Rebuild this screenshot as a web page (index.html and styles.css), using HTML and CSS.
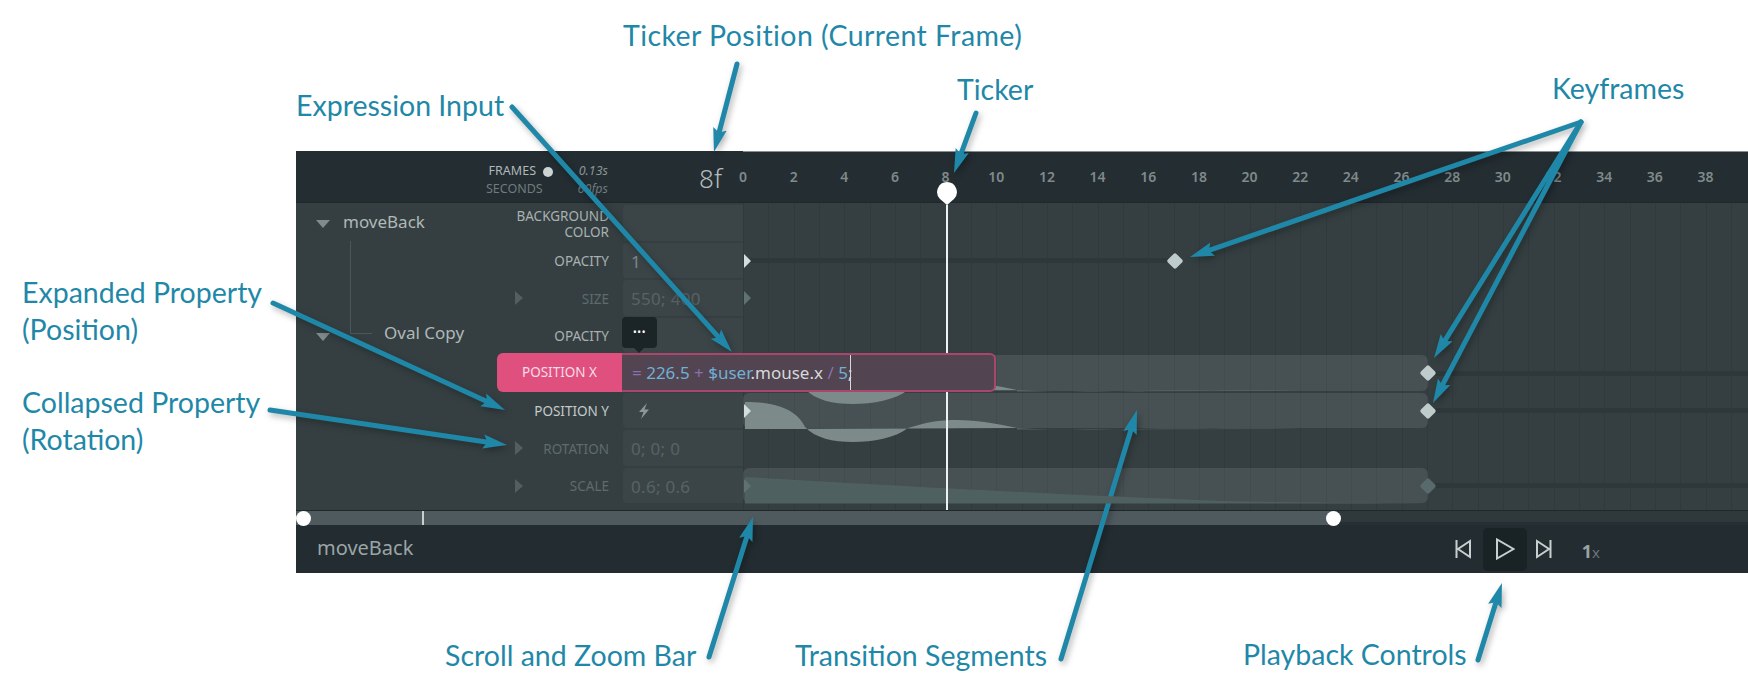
FILE: index.html
```html
<!DOCTYPE html>
<html lang="en">
<head>
    <meta charset="UTF-8">
    <title>Timeline overview</title>
    <link rel="stylesheet" href="styles.css">
</head>
<body>
    <div class="figure">
        <div class="app">
            <div class="app-header">
                <div class="header-left">
                    <div class="mode-labels">
                        <div class="mode-on">FRAMES</div>
                        <div>SECONDS</div>
                    </div>
                    <span class="mode-dot"></span>
                    <div class="frame-stats">
                        <div>0.13s</div>
                        <div>60fps</div>
                    </div>
                    <div class="current-frame">8f</div>
                </div>
                <div class="ruler-wrap">
                    <div class="ruler">
                        <span>0</span><span>2</span><span>4</span><span>6</span><span>8</span>
                        <span>10</span><span>12</span><span>14</span><span>16</span><span>18</span>
                        <span>20</span><span>22</span><span>24</span><span>26</span><span>28</span>
                        <span>30</span><span>32</span><span>34</span><span>36</span><span>38</span>
                    </div>
                </div>
            </div>

            <div class="timeline-body">
                <div class="row">
                    <div class="row-left">
                        <div class="element-name">
                            <span class="tri-down"></span>
                            <span class="name-root">moveBack</span>
                            <span class="tree-line"></span>
                        </div>
                        <div class="prop-label">BACKGROUND<br>COLOR</div>
                    </div>
                    <div class="prop-input"></div>
                    <div class="track"></div>
                </div>

                <div class="row">
                    <div class="row-left">
                        <div class="prop-label">OPACITY</div>
                    </div>
                    <div class="prop-input">1</div>
                    <div class="track">
                        <span class="track-line line-to-17"></span>
                        <span class="kf-start"></span>
                        <span class="keyframe frame-17"></span>
                    </div>
                </div>

                <div class="row">
                    <div class="row-left">
                        <span class="tri-right"></span>
                        <div class="prop-label dim">SIZE</div>
                    </div>
                    <div class="prop-input dim">550; 400</div>
                    <div class="track">
                        <span class="kf-start dim-kf"></span>
                    </div>
                </div>

                <div class="row">
                    <div class="row-left">
                        <div class="element-name">
                            <span class="tri-down"></span>
                            <span class="name-child">Oval Copy</span>
                        </div>
                        <div class="prop-label">OPACITY</div>
                    </div>
                    <div class="prop-input"></div>
                    <div class="track"></div>
                    <div class="more-tip">&bull;&bull;&bull;</div>
                </div>

                <div class="row">
                    <div class="row-left"></div>
                    <div class="prop-input"></div>
                    <div class="track">
                        <div class="segment">
                            <svg class="curve" width="685" height="36" viewBox="0 0 685 36">
                                <path d="M2 35L2 9C28 9 52 14 62 34C72 45 90 49 110 49C130 49 152 45 165 35C185 29 195 27 214 27C235 27 255 31 274 35L2 36Z"/>
                                <path class="sliver" d="M274 35C300 37 320 36 345 37C370 37 400 35 445 35.5C480 36 520 35 560 36L274 36.5Z"/>
                            </svg>
                        </div>
                        <span class="track-line line-after-27"></span>
                        <span class="keyframe frame-27"></span>
                    </div>
                    <div class="expr-editor">
                        <div class="expr-label">POSITION X</div>
                        <div class="expr-input"><span class="tok-op">=</span> <span class="tok-val">226.5</span> <span class="tok-op">+</span> <span class="tok-val">$user</span>.mouse.x <span class="tok-op">/</span> <span class="tok-val">5</span>;<span class="expr-cursor"></span></div>
                    </div>
                </div>

                <div class="row">
                    <div class="row-left">
                        <div class="prop-label bright">POSITION Y</div>
                    </div>
                    <div class="prop-input">
                        <svg class="bolt" width="14" height="16" viewBox="0 0 14 16">
                            <polygon points="10,0 2,9 6.5,9 4,16 12,6.5 7.5,6.5"/>
                        </svg>
                    </div>
                    <div class="track">
                        <div class="segment">
                            <svg class="curve" width="685" height="36" viewBox="0 0 685 36">
                                <path d="M2 35L2 9C28 9 52 14 62 34C72 45 90 49 110 49C130 49 152 45 165 35C185 29 195 27 214 27C235 27 255 31 274 35L2 36Z"/>
                                <path class="sliver" d="M274 35C300 37 320 36 345 37C370 37 400 35 445 35.5C480 36 520 35 560 36L274 36.5Z"/>
                            </svg>
                        </div>
                        <span class="kf-start"></span>
                        <span class="track-line line-after-27"></span>
                        <span class="keyframe frame-27"></span>
                    </div>
                </div>

                <div class="row">
                    <div class="row-left">
                        <span class="tri-right"></span>
                        <div class="prop-label dim">ROTATION</div>
                    </div>
                    <div class="prop-input dim">0; 0; 0</div>
                    <div class="track"></div>
                </div>

                <div class="row">
                    <div class="row-left">
                        <span class="tri-right"></span>
                        <div class="prop-label dim">SCALE</div>
                    </div>
                    <div class="prop-input dim">0.6; 0.6</div>
                    <div class="track">
                        <div class="segment">
                            <svg class="curve curve-scale" width="685" height="36" viewBox="0 0 685 36">
                                <path d="M2 35.5L2 9C120 16 300 26 480 33C560 35 620 35 684 35.5Z"/>
                            </svg>
                        </div>
                        <span class="kf-start dim-kf"></span>
                        <span class="track-line line-after-27"></span>
                        <span class="keyframe frame-27 dim-diamond"></span>
                    </div>
                </div>
            </div>

            <div class="scrollbar">
                <div class="scroll-thumb">
                    <span class="scroll-handle handle-left"></span>
                    <span class="scroll-tick"></span>
                    <span class="scroll-handle handle-right"></span>
                </div>
            </div>

            <div class="app-footer">
                <div class="comp-name">moveBack</div>
                <div class="controls">
                    <svg class="ctl-icon" width="16" height="20" viewBox="0 0 16 20">
                        <path d="M1.5 1V19M15 2V18L3 10Z"/>
                    </svg>
                    <div class="play-btn">
                        <svg class="ctl-icon" width="20" height="22" viewBox="0 0 20 22">
                            <path d="M2 1.5V20.5L18.5 11Z"/>
                        </svg>
                    </div>
                    <svg class="ctl-icon" width="16" height="20" viewBox="0 0 16 20">
                        <path d="M14.5 1V19M1 2V18L13 10Z"/>
                    </svg>
                    <div class="speed"><b>1</b>x</div>
                </div>
            </div>

            <div class="ticker">
                <svg width="20" height="23" viewBox="0 0 20 23">
                    <path d="M10 0A10 10 0 0 1 17 17L10 23L3 17A10 10 0 0 1 10 0Z"/>
                </svg>
                <span class="ticker-line"></span>
            </div>
        </div>

        <!-- callouts -->
        <div class="callout c-ticker-pos">Ticker Position (Current Frame)</div>
        <div class="callout c-ticker">Ticker</div>
        <div class="callout c-keyframes">Keyframes</div>
        <div class="callout c-expression">Expression Input</div>
        <div class="callout c-expanded">Expanded Property<br>(Position)</div>
        <div class="callout c-collapsed">Collapsed Property<br>(Rotation)</div>
        <div class="callout c-scroll">Scroll and Zoom Bar</div>
        <div class="callout c-segments">Transition Segments</div>
        <div class="callout c-playback">Playback Controls</div>

        <svg class="arrows" width="1748" height="699" viewBox="0 0 1748 699">
            <defs>
                <marker id="head" markerUnits="userSpaceOnUse" markerWidth="26" markerHeight="18" refX="10" refY="9" orient="auto">
                    <path class="arrow-head" d="M0 2L24 9L0 16L4 9Z"/>
                </marker>
            </defs>
            <line x1="737" y1="64" x2="717.5" y2="138.5" marker-end="url(#head)"/>
            <line x1="976" y1="113" x2="958.8" y2="159.9" marker-end="url(#head)"/>
            <line x1="512" y1="107" x2="722.6" y2="341.6" marker-end="url(#head)"/>
            <line x1="1581" y1="122" x2="1203.2" y2="252.4" marker-end="url(#head)"/>
            <line x1="1581" y1="122" x2="1441.4" y2="346.1" marker-end="url(#head)"/>
            <line x1="1581" y1="122" x2="1439.5" y2="390.6" marker-end="url(#head)"/>
            <line x1="273" y1="303" x2="492.3" y2="404.1" marker-end="url(#head)"/>
            <line x1="270" y1="410" x2="493.2" y2="443" marker-end="url(#head)"/>
            <line x1="709" y1="657" x2="748.8" y2="530.4" marker-end="url(#head)"/>
            <line x1="1061" y1="659" x2="1132.9" y2="423.4" marker-end="url(#head)"/>
            <line x1="1478" y1="660" x2="1497.8" y2="596.4" marker-end="url(#head)"/>
        </svg>
    </div>
</body>
</html>
```

FILE: styles.css
```css
body {
    margin: 0;
    background-color: #fff;
    font-family: "Noto Sans", sans-serif;
}
.figure {
    position: relative;
    box-sizing: border-box;
    width: 1748px;
    height: 699px;
    padding: 151px 0 0 296px;
    overflow: hidden;
}

/* app */
.app {
    position: relative;
    height: 422px;
    color: #b0b8b8;
}
.app-header {
    display: flex;
    box-sizing: border-box;
    height: 52px;
    background-color: #232d32;
    border-bottom: 1px solid #1e272a;
}
.header-left {
    display: flex;
    align-items: center;
    box-sizing: border-box;
    width: 447px;
    padding: 0 21px 0 190px;
}
.mode-labels {
    width: 50px;
    font-size: 12.5px;
    line-height: 18px;
    text-align: right;
    color: #6f7b7d;
    white-space: nowrap;
    margin-top: 7px;
}
.mode-on {
    color: #b0b8b8;
}
.mode-dot {
    width: 10px;
    height: 10px;
    margin: -9px 0 0 7px;
    border-radius: 50%;
    background-color: #ccd4d4;
}
.frame-stats {
    width: 55px;
    font-size: 12.5px;
    font-style: italic;
    line-height: 18px;
    text-align: right;
    color: #8a9596;
    margin-top: 7px;
}
.frame-stats div + div {
    color: #6f7b7d;
}
.current-frame {
    margin-left: auto;
    font-size: 26px;
    font-weight: 300;
    color: #b4bcbc;
    padding-top: 2px;
}
.ruler-wrap {
    flex: 1;
    border-top: 1px solid #8a9092;
}
.ruler {
    display: flex;
    margin-left: -25.33px;
    padding-top: 16px;
}
.ruler span {
    flex: none;
    width: 50.66px;
    font-size: 14px;
    font-weight: 600;
    line-height: 18px;
    text-align: center;
    color: #7f8a8c;
}

/* rows */
.timeline-body {
    height: 307px;
    background: repeating-linear-gradient(90deg, #303a3c 0 1px, transparent 1px 25.33px) 447px 0 / 1005px 100% no-repeat, #353f41;
}
.row {
    position: relative;
    display: grid;
    grid-template-columns: 327px 120px 1fr;
    height: 37.5px;
}
.row-left {
    position: relative;
    display: flex;
    align-items: center;
    justify-content: flex-end;
    padding: 4px 14px 0 0;
}
.prop-label {
    font-size: 13.5px;
    line-height: 16px;
    text-align: right;
    color: #a8b1b1;
}
.prop-label.bright {
    color: #c2caca;
}
.prop-label.dim {
    color: #5e6b6d;
}
.prop-input {
    display: flex;
    align-items: center;
    margin-top: 2px;
    padding: 2px 0 0 8px;
    border-radius: 4px 0 0 4px;
    background-color: #3b4548;
    font-size: 17px;
    letter-spacing: 0.3px;
    color: #7c8889;
}
.prop-input.dim {
    color: #566365;
}
.bolt {
    margin-left: 6px;
    fill: #8c9898;
}
.element-name {
    position: absolute;
    left: 0;
    top: 0;
    bottom: 0;
}
.tri-down {
    position: absolute;
    left: 20px;
    top: 17px;
    border-top: 8px solid #808b8b;
    border-left: 7px solid transparent;
    border-right: 7px solid transparent;
}
.name-root,
.name-child {
    position: absolute;
    top: 9px;
    font-size: 17px;
    line-height: 20px;
    color: #b0b8b8;
    white-space: nowrap;
}
.name-root {
    left: 47px;
}
.name-child {
    left: 88px;
    top: 7px;
}
.tree-line {
    position: absolute;
    left: 54px;
    top: 38px;
    width: 21px;
    height: 92px;
    border-left: 1px solid #485759;
    border-bottom: 1px solid #485759;
}
.tri-right {
    position: absolute;
    left: 219px;
    top: 13px;
    border-left: 8px solid #525e60;
    border-top: 7px solid transparent;
    border-bottom: 7px solid transparent;
}
.more-tip {
    position: absolute;
    left: 326px;
    top: 1px;
    width: 35px;
    height: 31px;
    border-radius: 4px;
    background-color: #1b2427;
    font-size: 10px;
    line-height: 30px;
    letter-spacing: 0.5px;
    text-align: center;
    color: #fff;
    z-index: 3;
}
.more-tip::after {
    content: "";
    position: absolute;
    left: 12px;
    bottom: -5px;
    border-top: 5px solid #1b2427;
    border-left: 5px solid transparent;
    border-right: 5px solid transparent;
}

/* tracks */
.track {
    position: relative;
}
.segment {
    position: absolute;
    left: 0;
    top: 2px;
    width: 685px;
    height: 35.5px;
    border-radius: 6px;
    background-color: rgba(255, 255, 255, 0.09);
}
.curve {
    position: absolute;
    left: 0;
    top: 0;
    overflow: visible;
    fill: #7d8a8a;
    z-index: 1;
}
.sliver {
    fill-opacity: 0.45;
}
.curve-scale {
    fill: #4f6061;
}
.track-line {
    position: absolute;
    top: 17.5px;
    height: 5px;
    background-color: #2e383a;
}
.line-to-17 {
    left: 6px;
    width: 426px;
}
.line-after-27 {
    left: 685px;
    right: 0;
}
.keyframe {
    position: absolute;
    top: 14px;
    width: 12px;
    height: 12px;
    border-radius: 2px;
    background-color: #bfcccc;
    transform: rotate(45deg);
    z-index: 1;
}
.frame-17 {
    left: 426px;
}
.frame-27 {
    left: 679px;
}
.dim-diamond {
    background-color: #586a6b;
}
.kf-start {
    position: absolute;
    left: 1px;
    top: 13px;
    border-left: 7px solid #d5dcdc;
    border-top: 7px solid transparent;
    border-bottom: 7px solid transparent;
    z-index: 1;
}
.dim-kf {
    border-left-color: #5f7173;
}

/* expression editor */
.expr-editor {
    position: absolute;
    left: 201px;
    top: 0;
    display: flex;
    width: 499px;
    height: 39px;
    z-index: 3;
}
.expr-label {
    flex: none;
    width: 125px;
    border-radius: 6px 0 0 6px;
    background-color: #e0507f;
    font-size: 13.5px;
    line-height: 39px;
    text-align: center;
    color: #f6dde6;
}
.expr-input {
    flex: 1;
    box-sizing: border-box;
    padding-left: 10px;
    border: 2px solid #a9466c;
    border-left: none;
    border-radius: 0 6px 6px 0;
    background-color: #524450;
    font-size: 17px;
    line-height: 35px;
    white-space: pre;
    color: #d5d9d9;
}
.tok-op {
    color: #8b6fae;
}
.tok-val {
    color: #6fb0d6;
}
.expr-cursor {
    display: inline-block;
    width: 1px;
    height: 35px;
    margin-left: -2px;
    vertical-align: top;
    background-color: #d5d9d9;
}

/* scroll bar and footer */
.scrollbar {
    box-sizing: border-box;
    height: 15px;
    border-top: 1px solid #1e272a;
    border-bottom: 3px solid #263034;
    background-color: #2f393c;
}
.scroll-thumb {
    position: relative;
    width: 1037px;
    height: 14px;
    background-color: #4f5a5f;
}
.scroll-handle {
    position: absolute;
    top: 0;
    width: 15px;
    height: 15px;
    border-radius: 50%;
    background-color: #fff;
}
.handle-left {
    left: 0;
}
.handle-right {
    right: -7.5px;
}
.scroll-tick {
    position: absolute;
    left: 126px;
    top: 0;
    width: 2px;
    height: 14px;
    background-color: #c9cece;
}
.app-footer {
    display: flex;
    align-items: center;
    height: 48px;
    padding: 0 148px 0 21px;
    background-color: #222c31;
}
.comp-name {
    font-size: 20px;
    line-height: 26px;
    margin-top: -3px;
    color: #9ba5a5;
}
.controls {
    display: flex;
    align-items: center;
    margin-left: auto;
}
.ctl-icon {
    display: block;
    fill: none;
    stroke: #c8cfcf;
    stroke-width: 2;
}
.play-btn {
    display: flex;
    align-items: center;
    justify-content: center;
    width: 44px;
    height: 43px;
    margin: 0 9px 0 12px;
    border-radius: 5px;
    background-color: #192225;
}
.speed {
    margin: 3px 0 0 30px;
    font-size: 15px;
    color: #6b7678;
}
.speed b {
    font-size: 18px;
    color: #9aa4a4;
}

/* ticker sits over the rows, under the editor */
.ticker {
    position: absolute;
    left: 640.5px;
    top: 31px;
    display: flex;
    flex-direction: column;
    align-items: center;
    width: 20px;
    height: 328px;
    fill: #fff;
    z-index: 2;
}
.ticker svg {
    flex: none;
    display: block;
}
.ticker-line {
    flex: 1;
    width: 2px;
    background-color: #eef1f1;
}

/* annotations */
.callout {
    position: absolute;
    font-family: Lato, sans-serif;
    font-size: 28.5px;
    line-height: 37px;
    color: #1f88a8;
    white-space: nowrap;
}
.c-ticker-pos { left: 623px; top: 17px; letter-spacing: 0.43px; }
.c-ticker { left: 957px; top: 71px; }
.c-keyframes { left: 1552px; top: 70px; }
.c-expression { left: 296px; top: 87px; }
.c-expanded { left: 22px; top: 274px; }
.c-collapsed { left: 22px; top: 384px; }
.c-scroll { left: 445px; top: 637px; }
.c-segments { left: 795px; top: 637px; }
.c-playback { left: 1243px; top: 636px; }
.arrows {
    position: absolute;
    left: 0;
    top: 0;
    filter: drop-shadow(2px 3px 3px rgba(0, 0, 0, 0.3));
}
.arrows line {
    stroke: #1f88a8;
    stroke-width: 5;
    stroke-linecap: round;
}
.arrow-head {
    fill: #1f88a8;
}
```
